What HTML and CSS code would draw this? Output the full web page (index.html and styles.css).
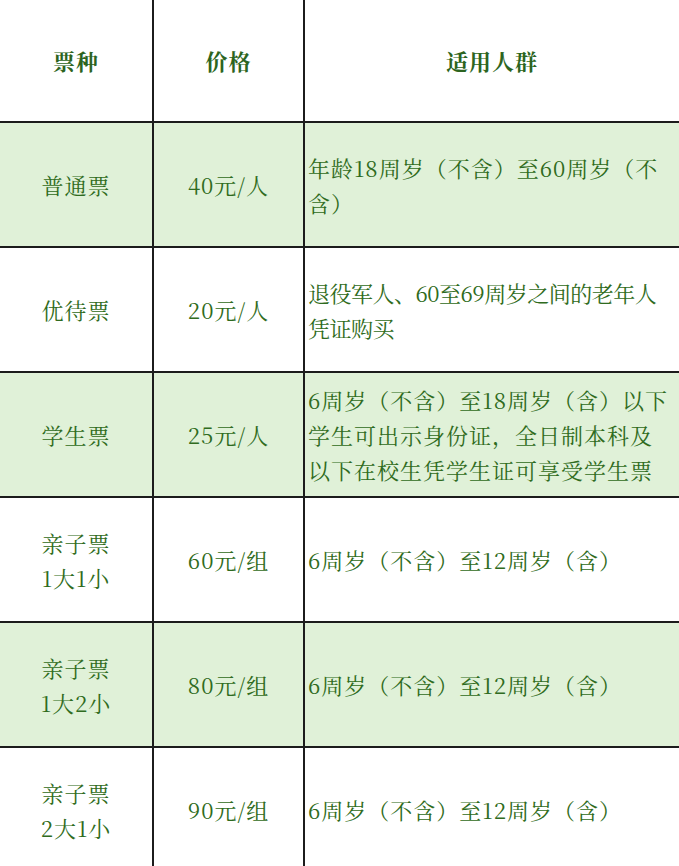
FILE: index.html
```html
<!DOCTYPE html>
<html lang="zh-CN">
<head>
<meta charset="utf-8">
<title>票价</title>
<link rel="stylesheet" href="styles.css">
</head>
<body>
<div class="table">
  <div class="cell head c">票种</div>
  <div class="cell head c">价格</div>
  <div class="cell head c">适用人群</div>

  <div class="cell g c">普通票</div>
  <div class="cell g c">40元/人</div>
  <div class="cell g l">年龄18周岁（不含）至60周岁（不含）</div>

  <div class="cell c">优待票</div>
  <div class="cell c">20元/人</div>
  <div class="cell l tight"><span>退役军人、60至69周岁之间的老年人<br>凭证购买</span></div>

  <div class="cell g c">学生票</div>
  <div class="cell g c">25元/人</div>
  <div class="cell g l">6周岁（不含）至18周岁（含）以下学生可出示身份证，全日制本科及以下在校生凭学生证可享受学生票</div>

  <div class="cell c">亲子票<br>1大1小</div>
  <div class="cell c">60元/组</div>
  <div class="cell l">6周岁（不含）至12周岁（含）</div>

  <div class="cell g c">亲子票<br>1大2小</div>
  <div class="cell g c">80元/组</div>
  <div class="cell g l">6周岁（不含）至12周岁（含）</div>

  <div class="cell c">亲子票<br>2大1小</div>
  <div class="cell c">90元/组</div>
  <div class="cell l">6周岁（不含）至12周岁（含）</div>
</div>
</body>
</html>
```

FILE: styles.css
```css
html, body {
  margin: 0;
  padding: 0;
  background: #ffffff;
}
body {
  width: 679px;
  height: 866px;
  overflow: hidden;
  font-family: "Noto Serif CJK SC", "Liberation Serif", "Noto Sans CJK SC", serif;
  color: #2f6b20;
  font-size: 22px;
  letter-spacing: 1px;
}
.table {
  display: grid;
  grid-template-columns: 152px 149px 374px;
  grid-template-rows: 121px repeat(6, 123px);
  gap: 2px;
  background: #1c1c1c;
  width: 679px;
}
.cell {
  background: #ffffff;
  display: flex;
  align-items: center;
  line-height: 35px;
}
.cell.g {
  background: #e0f1d8;
}
.cell.c {
  justify-content: center;
  text-align: center;
}
.cell.l {
  padding: 0 8px 0 3px;
}
.cell.tight {
  letter-spacing: -0.5px;
  white-space: nowrap;
}
.cell.head {
  font-weight: bold;
  color: #2c6420;
}
```
